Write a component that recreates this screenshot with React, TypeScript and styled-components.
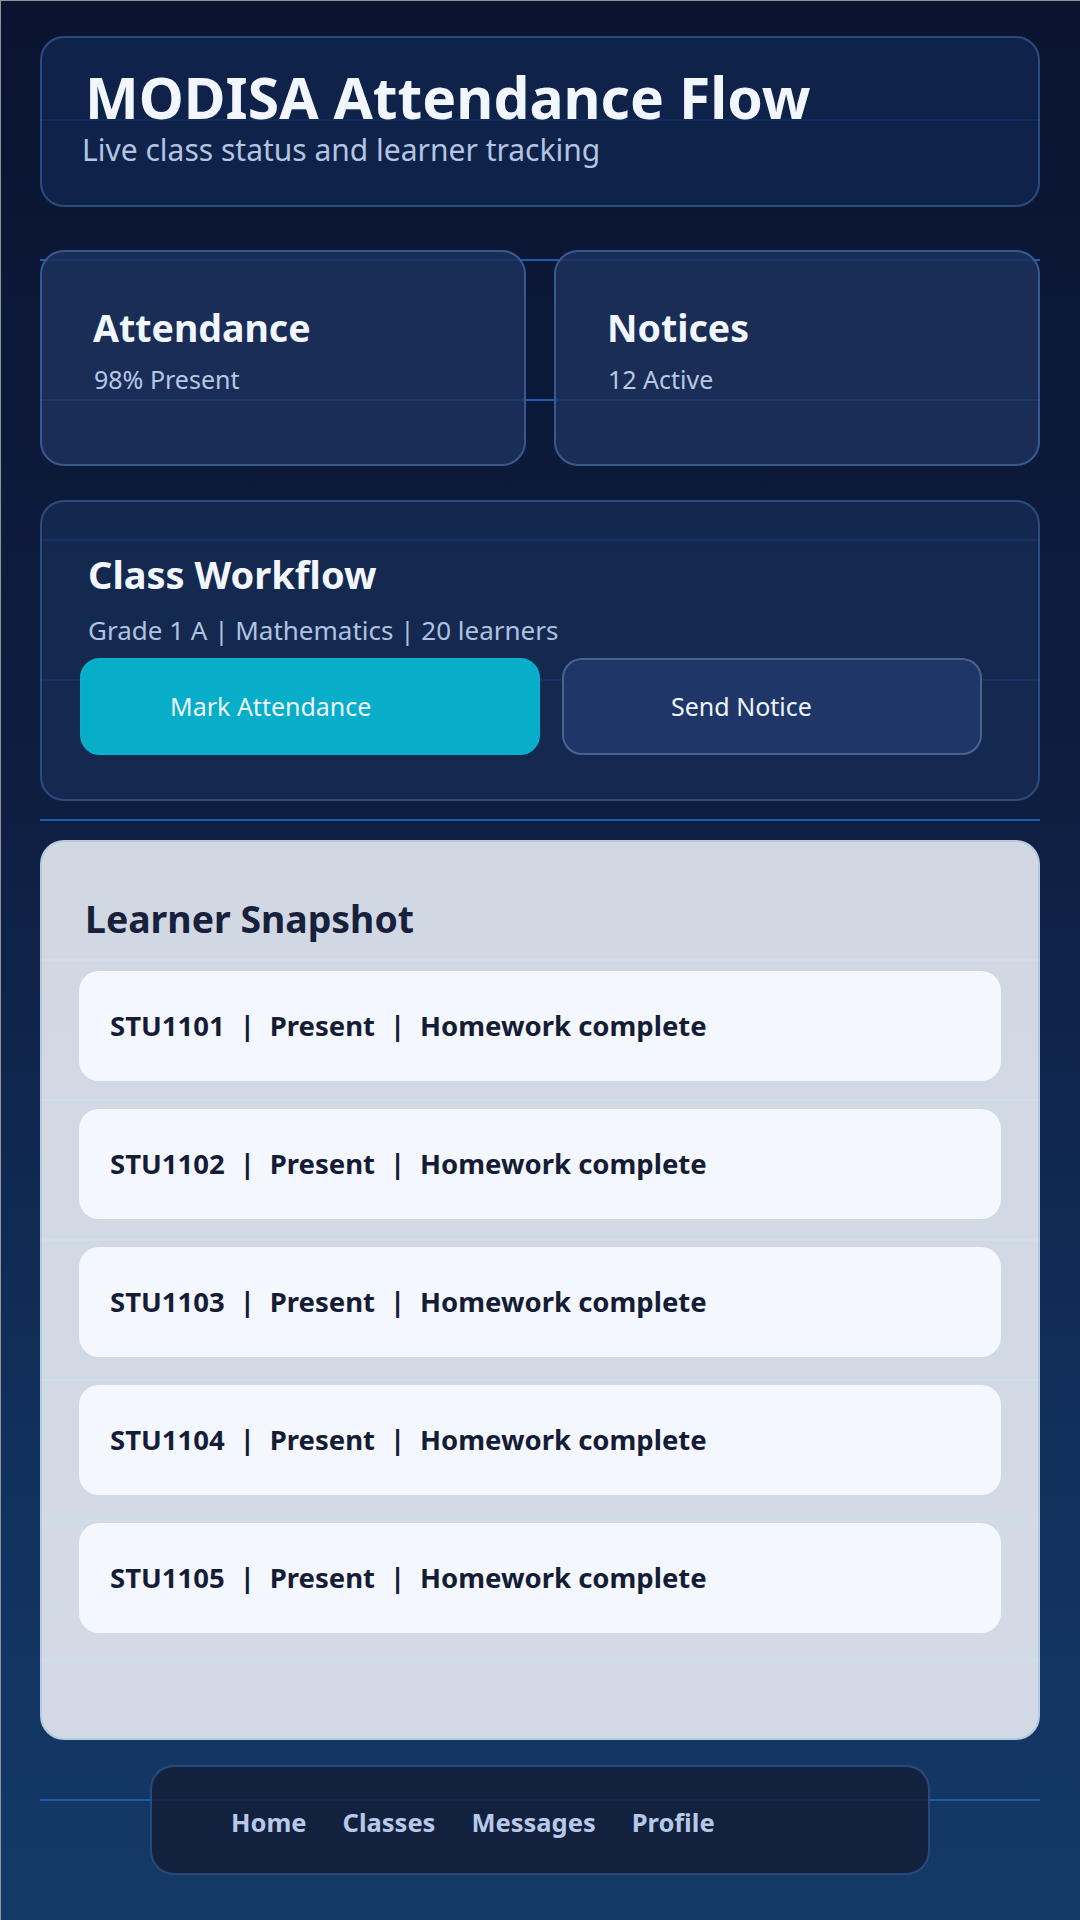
import React from "react";
import styled, { createGlobalStyle } from "styled-components";

const GlobalStyle = createGlobalStyle`
  html, body {
    margin: 0;
    padding: 0;
  }
  body {
    min-height: 1920px;
    background: linear-gradient(180deg, #0a1430 0%, #0e1d40 40%, #11305c 75%, #143a68 100%);
    font-family: "Noto Sans", "Open Sans", sans-serif;
    -webkit-font-smoothing: antialiased;
  }
  body::after {
    content: "";
    position: fixed;
    inset: 0;
    border-top: 1px solid #8d929b;
    border-left: 1px solid #8d929b;
    pointer-events: none;
  }
`;

const Page = styled.div`
  box-sizing: border-box;
  min-height: 1920px;
  padding: 0 40px;
`;

const Column = styled.main`
  box-sizing: border-box;
  min-height: 1920px;
  padding-top: 36px;
  display: flex;
  flex-direction: column;
  background-image: linear-gradient(
    to bottom,
    transparent 119px,
    #1d5bab 119px,
    #1d5bab 121px,
    transparent 121px
  );
  background-size: 100% 140px;
`;

const HeaderCard = styled.header`
  box-sizing: border-box;
  height: 171px;
  padding: 25px 36px 0 43px;
  border-radius: 24px;
  border: 2px solid rgba(70, 110, 170, 0.55);
  background: rgba(17, 36, 78, 0.85);
`;

const Title = styled.h1`
  margin: 0;
  font-size: 57px;
  line-height: 1.2;
  font-weight: 700;
  color: #f2f6ff;
  letter-spacing: 0;
`;

const Subtitle = styled.p`
  margin: 1px 0 0 -3px;
  font-size: 30px;
  line-height: 1.2;
  font-weight: 400;
  color: #b3c5e3;
`;

const StatsRow = styled.section`
  margin-top: 43px;
  display: grid;
  grid-template-columns: 1fr 1fr;
  gap: 28px;
`;

const StatCard = styled.div`
  box-sizing: border-box;
  height: 216px;
  padding: 53px 30px 0 51px;
  border-radius: 24px;
  border: 2px solid rgba(80, 120, 180, 0.6);
  background: rgba(28, 49, 93, 0.85);
`;

const CardTitle = styled.h2`
  margin: 0;
  font-size: 37.5px;
  line-height: 1.2;
  font-weight: 700;
  color: #f2f6ff;
`;

const StatValue = styled.p`
  margin: 14px 0 0 1px;
  font-size: 25px;
  line-height: 1.2;
  color: #b8c8e4;
`;

const WorkflowCard = styled.section`
  box-sizing: border-box;
  height: 301px;
  margin-top: 34px;
  padding: 50px 30px 0 38px;
  border-radius: 24px;
  border: 2px solid rgba(70, 110, 170, 0.5);
  background: rgba(22, 44, 83, 0.85);
`;

const WorkflowTitle = styled(CardTitle)`
  margin-left: 8px;
  font-size: 38px;
`;

const Meta = styled.p`
  margin: 17px 0 0 8px;
  font-size: 26px;
  line-height: 1.2;
  color: #b0c2e0;
  white-space: pre;
`;

const Actions = styled.div`
  margin-top: 12px;
  display: flex;
  gap: 22px;
`;

const ActionButton = styled.button<{ $primary?: boolean; $w: number; $pl: number }>`
  box-sizing: border-box;
  width: ${(p) => p.$w}px;
  height: 97px;
  padding: 0 0 0 ${(p) => p.$pl}px;
  display: flex;
  align-items: center;
  border-radius: 20px;
  border: 2px solid ${(p) => (p.$primary ? "#08b0cb" : "rgba(90, 115, 160, 0.75)")};
  background: ${(p) => (p.$primary ? "#06aec9" : "#1e3768")};
  color: #eef5ff;
  font-family: inherit;
  font-size: 25px;
  font-weight: 400;
  cursor: pointer;
`;

const SnapshotCard = styled.section`
  box-sizing: border-box;
  height: 900px;
  margin-top: 39px;
  padding: 55px 37px 0 37px;
  border-radius: 24px;
  border: 2px solid rgba(170, 190, 215, 0.6);
  background: rgba(226, 232, 241, 0.92);
`;

const SnapshotTitle = styled.h2`
  margin: 0 0 0 6px;
  font-size: 37.4px;
  line-height: 1.2;
  font-weight: 700;
  color: #18213b;
`;

const RowList = styled.ul`
  list-style: none;
  margin: 29px 0 0;
  padding: 0;
  display: flex;
  flex-direction: column;
  gap: 28px;
`;

const LearnerRow = styled.li`
  box-sizing: border-box;
  height: 110px;
  padding-left: 31px;
  display: flex;
  align-items: center;
  border-radius: 20px;
  background: #f4f7fd;
  color: #151d36;
  font-size: 27.5px;
  font-weight: 700;
  white-space: nowrap;
`;

const Sep = styled.span`
  display: inline-block;
  width: 45px;
  text-align: center;
`;

const Nav = styled.nav`
  box-sizing: border-box;
  align-self: center;
  width: 780px;
  height: 110px;
  margin-top: 25px;
  padding: 4px 0 0 79px;
  display: flex;
  align-items: center;
  gap: 36px;
  border-radius: 24px;
  border: 2px solid rgba(60, 100, 160, 0.6);
  background: rgba(19, 29, 55, 0.85);
`;

const NavLink = styled.a`
  color: #b7c8e8;
  font-size: 25.5px;
  font-weight: 700;
  text-decoration: none;
`;

const learners = ["STU1101", "STU1102", "STU1103", "STU1104", "STU1105"];

export default function App() {
  return (
    <>
      <GlobalStyle />
      <Page>
        <Column>
          <HeaderCard>
            <Title>MODISA Attendance Flow</Title>
            <Subtitle>Live class status and learner tracking</Subtitle>
          </HeaderCard>

          <StatsRow>
            <StatCard>
              <CardTitle>Attendance</CardTitle>
              <StatValue>98% Present</StatValue>
            </StatCard>
            <StatCard>
              <CardTitle>Notices</CardTitle>
              <StatValue>12 Active</StatValue>
            </StatCard>
          </StatsRow>

          <WorkflowCard>
            <WorkflowTitle>Class Workflow</WorkflowTitle>
            <Meta>{"Grade 1 A | Mathematics | 20 learners"}</Meta>
            <Actions>
              <ActionButton $primary $w={460} $pl={88}>
                Mark Attendance
              </ActionButton>
              <ActionButton $w={420} $pl={107}>
                Send Notice
              </ActionButton>
            </Actions>
          </WorkflowCard>

          <SnapshotCard>
            <SnapshotTitle>Learner Snapshot</SnapshotTitle>
            <RowList>
              {learners.map((id) => (
                <LearnerRow key={id}>
                  {id}
                  <Sep>|</Sep>
                  Present
                  <Sep>|</Sep>
                  Homework complete
                </LearnerRow>
              ))}
            </RowList>
          </SnapshotCard>

          <Nav>
            <NavLink href="#">Home</NavLink>
            <NavLink href="#">Classes</NavLink>
            <NavLink href="#">Messages</NavLink>
            <NavLink href="#">Profile</NavLink>
          </Nav>
        </Column>
      </Page>
    </>
  );
}
